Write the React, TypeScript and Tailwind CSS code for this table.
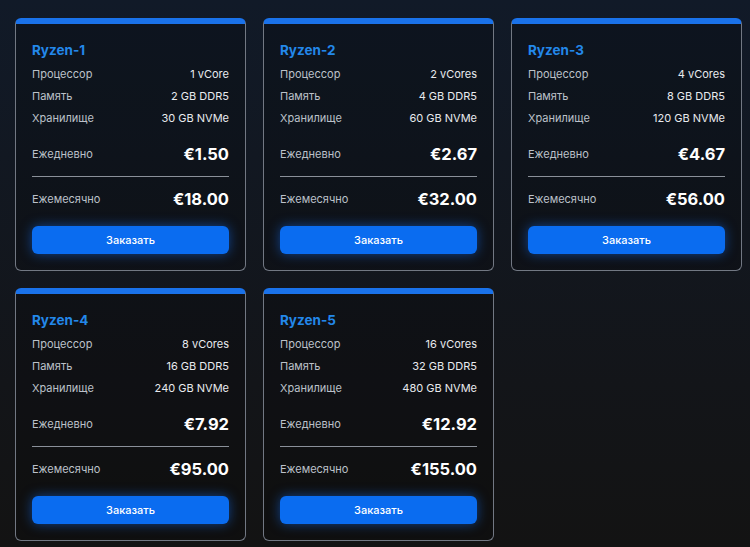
const plans = [
  { name: "Ryzen-1", cpu: "1 vCore", ram: "2 GB DDR5", disk: "30 GB NVMe", daily: "€1.50", monthly: "€18.00" },
  { name: "Ryzen-2", cpu: "2 vCores", ram: "4 GB DDR5", disk: "60 GB NVMe", daily: "€2.67", monthly: "€32.00" },
  { name: "Ryzen-3", cpu: "4 vCores", ram: "8 GB DDR5", disk: "120 GB NVMe", daily: "€4.67", monthly: "€56.00" },
  { name: "Ryzen-4", cpu: "8 vCores", ram: "16 GB DDR5", disk: "240 GB NVMe", daily: "€7.92", monthly: "€95.00" },
  { name: "Ryzen-5", cpu: "16 vCores", ram: "32 GB DDR5", disk: "480 GB NVMe", daily: "€12.92", monthly: "€155.00" },
];

type Plan = (typeof plans)[number];

const SpecRow = ({ label, value }: { label: string; value: string }) => (
  <div className="flex items-center justify-between h-[22px] text-[11px]">
    <span className="text-[#bcc1c9]">{label}</span>
    <span className="text-[#e8eaee]">{value}</span>
  </div>
);

const PlanCard = ({ plan }: { plan: Plan }) => (
  <div className="flex flex-col w-[231px] h-[253px] rounded-md border border-[#727883] border-t-[6px] border-t-[#1a72ea] bg-black/20 px-4 pt-4 pb-[15px]">
    <h3 className="text-[13.5px] leading-5 font-bold text-[#2388ea] mb-[3px]">{plan.name}</h3>
    <SpecRow label="Процессор" value={plan.cpu} />
    <SpecRow label="Память" value={plan.ram} />
    <SpecRow label="Хранилище" value={plan.disk} />
    <div className="flex items-center justify-between h-7 mt-[11px]">
      <span className="text-[11px] text-[#bcc1c9]">Ежедневно</span>
      <span className="text-[16.5px] font-bold text-white">{plan.daily}</span>
    </div>
    <div className="h-px bg-[#8a9099] mt-2" />
    <div className="flex items-center justify-between h-7 mt-2">
      <span className="text-[11px] text-[#bcc1c9]">Ежемесячно</span>
      <span className="text-[16.5px] font-bold text-white">{plan.monthly}</span>
    </div>
    <button className="mt-[13px] h-7 w-full rounded-md bg-[#0a6cf0] text-[11px] font-medium text-white shadow-[0_0_12px_rgba(20,110,240,0.55)]">
      Заказать
    </button>
  </div>
);

export default function App() {
  return (
    <div
      className="min-h-[547px] w-[750px] bg-gradient-to-b from-[#111a28] via-[#131519] via-70% to-[#131313] pl-[15px] pt-[18px]"
      style={{ fontFamily: "Inter, 'Noto Sans', sans-serif" }}
    >
      <div className="grid grid-cols-[231px_231px_231px] gap-x-[17px] gap-y-[17px]">
        {plans.map((p) => (
          <PlanCard key={p.name} plan={p} />
        ))}
      </div>
    </div>
  );
}
